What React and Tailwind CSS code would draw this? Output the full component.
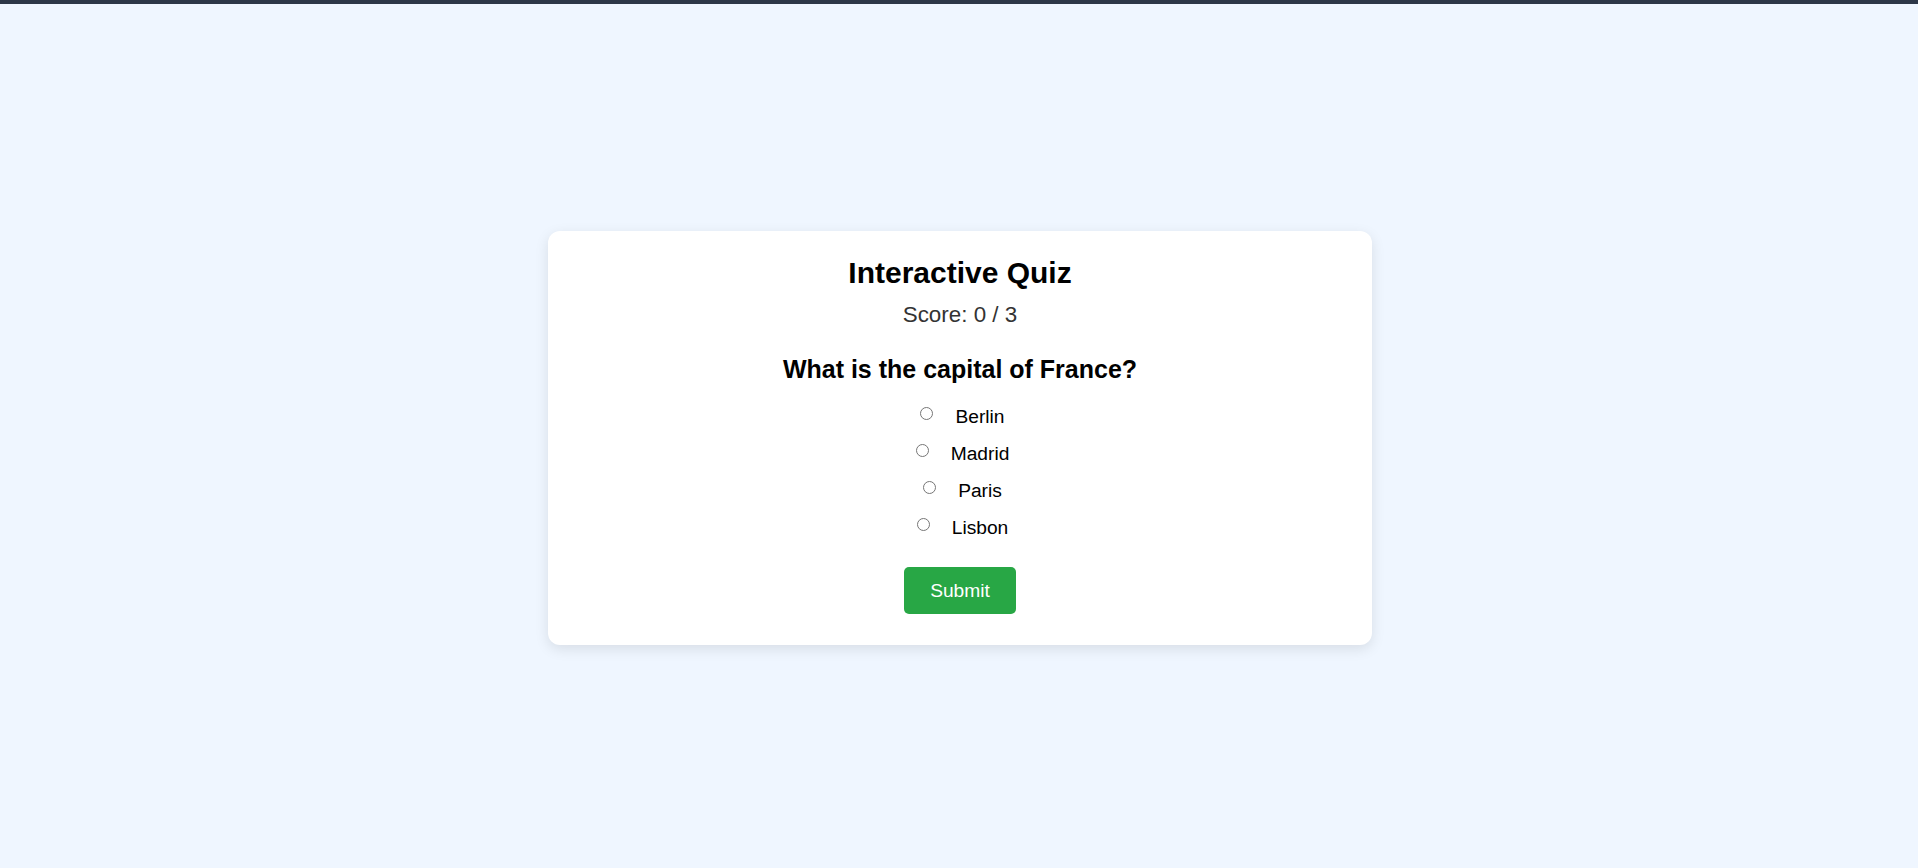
import React from "react";

const options = ["Berlin", "Madrid", "Paris", "Lisbon"];

export default function App() {
  return (
    <div
      className="w-full h-[868px] overflow-hidden bg-[#eff6ff] flex flex-col"
      style={{ fontFamily: '"Liberation Sans", Arial, sans-serif' }}
    >
      <div className="h-[4px] w-full bg-[#2d3748] shrink-0" />
      <div className="h-[868px] shrink-0 flex items-center justify-center pl-[2px]">
        <div className="w-[824px] bg-white rounded-xl shadow-[0_4px_14px_rgba(0,0,0,0.1)] pt-[24px] pb-[31px] flex flex-col items-center">
          <h1 className="text-[30px] leading-[36px] font-bold text-black">Interactive Quiz</h1>
          <p className="mt-[10px] text-[22.4px] leading-[28px] text-[#333]">Score: 0 / 3</p>
          <h2 className="mt-[24px] text-[25px] leading-[32px] font-bold text-black">
            What is the capital of France?
          </h2>
          <div className="mt-[20px] flex flex-col gap-[13px]">
            {options.map((o) => (
              <label key={o} className="flex items-start justify-center h-[24px]">
                <input
                  type="radio"
                  name="answer"
                  value={o}
                  className="appearance-none m-0 mt-[2px] ml-[5px] mr-[3px] w-[13px] h-[13px] shrink-0 rounded-full border border-[#767676] bg-white"
                />
                <span className="ml-[19px] text-[19.2px] leading-[24px] text-black">{o}</span>
              </label>
            ))}
          </div>
          <button className="mt-[27px] w-[112px] h-[47px] rounded-[5px] bg-[#28a745] text-white text-[19.2px] leading-[24px] flex items-center justify-center">
            Submit
          </button>
        </div>
      </div>
    </div>
  );
}
